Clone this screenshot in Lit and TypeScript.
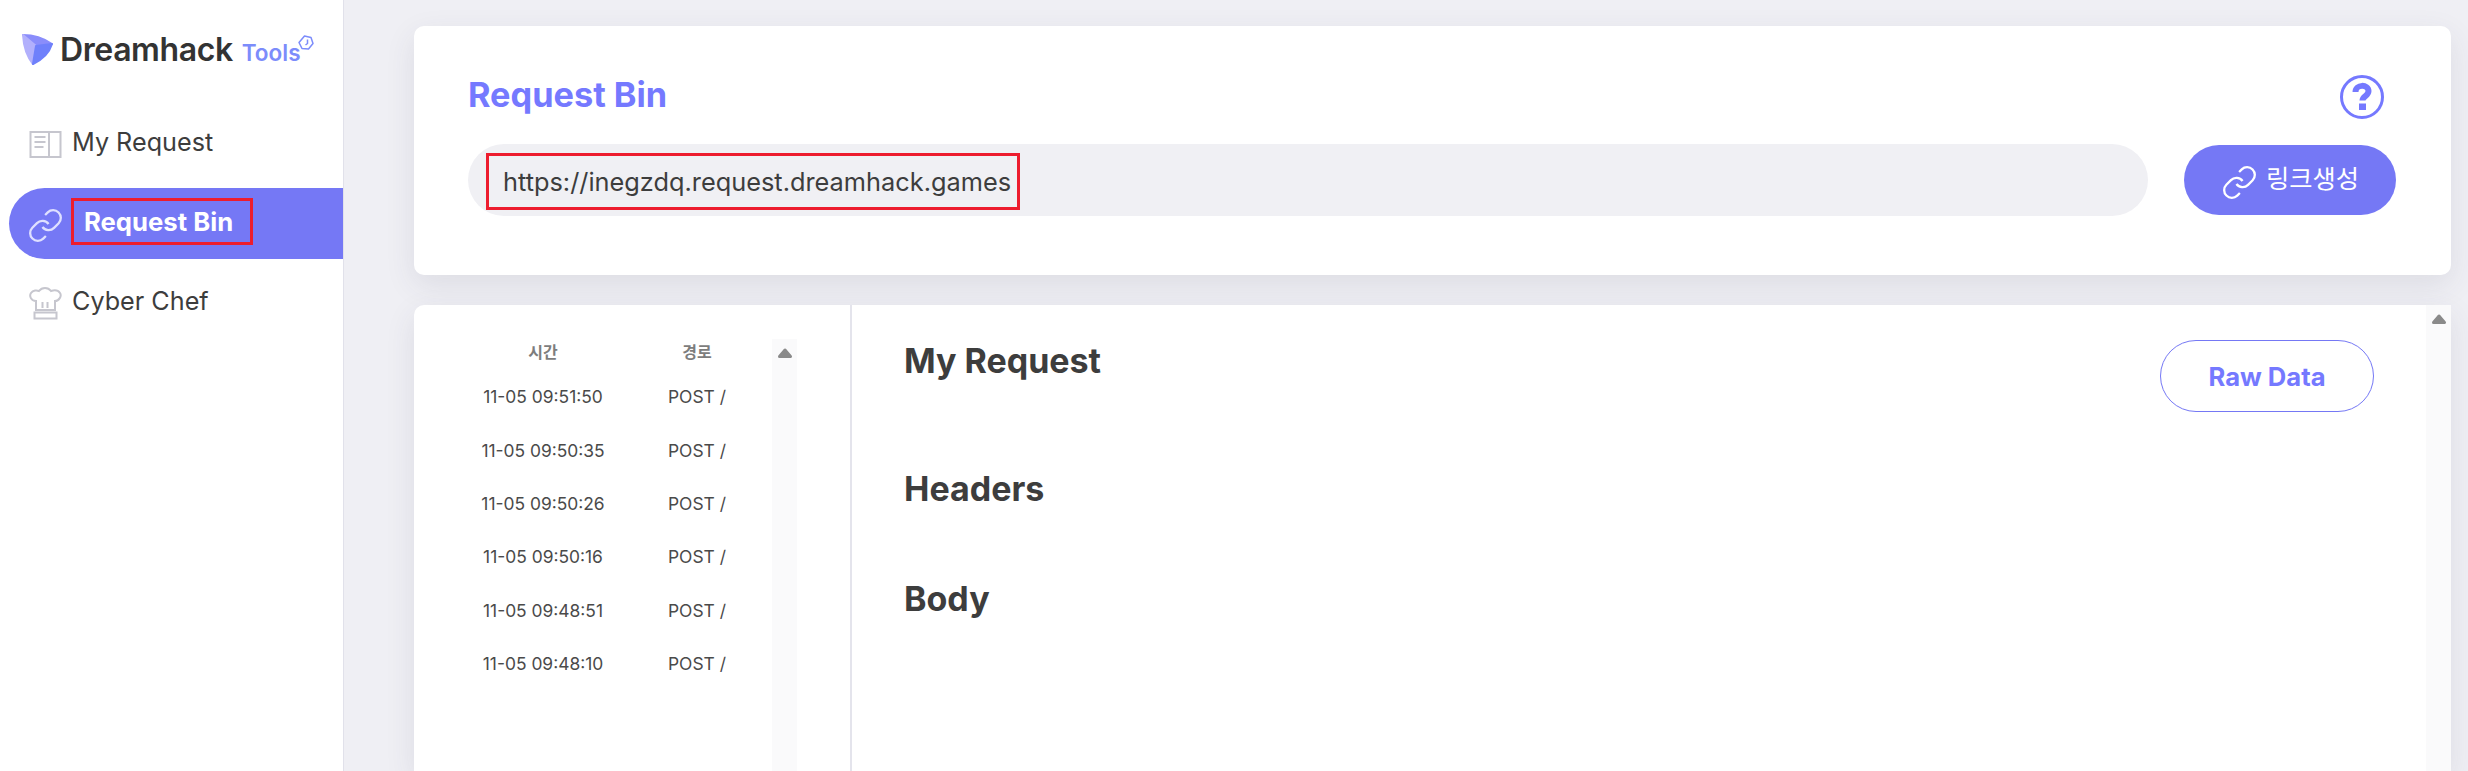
import { LitElement, html, css, svg } from 'lit';
import { customElement, state } from 'lit/decorators.js';

const linkIcon = svg`<path d="M10 13a5 5 0 0 0 7.54.54l3-3a5 5 0 0 0-7.07-7.07l-1.72 1.71"/><path d="M14 11a5 5 0 0 0-7.54-.54l-3 3a5 5 0 0 0 7.07 7.07l1.71-1.71"/>`;
const scrollArrow = svg`<path d="M8 3 13.500 9.500H2.500Z" fill="#8a8a8a" stroke="#8a8a8a" stroke-width="3" stroke-linejoin="round"/>`;

@customElement('app-root')
export class AppRoot extends LitElement {
  @state() requests = [
    '11-05 09:51:50',
    '11-05 09:50:35',
    '11-05 09:50:26',
    '11-05 09:50:16',
    '11-05 09:48:51',
    '11-05 09:48:10',
  ];

  static styles = css`
    :host {
      display: flex;
      width: 2468px;
      height: 771px;
      overflow: hidden;
      background: #efeff4;
      font-family: 'Inter', 'Noto Sans CJK KR', sans-serif;
      color: #3d3d3d;
    }

    .sidebar {
      box-sizing: border-box;
      width: 344px;
      flex: none;
      background: #fff;
      border-right: 1px solid #e1e1ea;
      padding-left: 9px;
    }

    .logo {
      display: flex;
      align-items: center;
      height: 34px;
      margin: 32px 0 0 12px;
    }

    .logo-mark {
      width: 33px;
      height: 33px;
      flex: none;
    }

    .logo-name {
      margin-left: 6px;
      font-size: 32px;
      font-weight: 600;
      letter-spacing: -0.4px;
      color: #333;
    }

    .logo-tools {
      margin: 6px 0 0 9px;
      font-size: 22.500px;
      font-weight: 600;
      color: #7c8cfb;
    }

    .logo-badge {
      width: 16px;
      height: 16px;
      margin: -12px 0 0 -3px;
      flex: none;
    }

    .nav {
      display: flex;
      flex-direction: column;
      margin-top: 40px;
    }

    .nav-item {
      display: flex;
      align-items: center;
      height: 71px;
      padding-left: 20px;
      font-size: 25.200px;
      color: #3d3d3d;
    }

    .nav-item.active {
      margin: 11px 0 6px;
      background: #7578f5;
      border-radius: 36px 0 0 36px;
      color: #fff;
      font-size: 25.700px;
      font-weight: 700;
    }

    .nav-icon {
      width: 33px;
      height: 33px;
      flex: none;
      margin: 5px 10px 0 0;
      fill: none;
      stroke: #c6c6ce;
      stroke-width: 2;
    }

    .active .nav-icon {
      width: 37px;
      height: 37px;
      margin: 3px 8px 0 -2px;
      stroke: #dfe0ff;
      stroke-width: 1.500;
    }

    .marked {
      box-sizing: border-box;
      border: 3px solid #ed1c2e;
    }

    .nav-label {
      display: flex;
      align-items: center;
      width: 182px;
      height: 47px;
      margin: -4px 0 0 -1px;
      padding-left: 10px;
    }

    .main {
      flex: 1;
      min-width: 0;
      padding: 26px 17px 0 70px;
      display: flex;
      flex-direction: column;
      gap: 30px;
    }

    .card {
      background: #fff;
      border-radius: 10px;
      box-shadow: 0 10px 30px rgba(60, 60, 90, 0.1);
    }

    .bin-card {
      box-sizing: border-box;
      height: 249px;
      flex: none;
      padding: 46px 55px 0 54px;
    }

    .bin-head {
      display: flex;
      justify-content: space-between;
      align-items: flex-start;
      height: 72px;
    }

    .bin-title {
      margin: 0;
      font-size: 34.300px;
      line-height: 46px;
      font-weight: 700;
      color: #7579ff;
    }

    .help {
      width: 46px;
      height: 46px;
      margin: 2px 11px 0 0;
    }

    .bin-row {
      display: flex;
      align-items: center;
      gap: 36px;
    }

    .url-field {
      box-sizing: border-box;
      flex: 1;
      height: 72px;
      padding: 3px 0 0 18px;
      border-radius: 36px;
      background: #f0f0f4;
      display: flex;
      align-items: center;
    }

    .url {
      width: 534px;
      height: 57px;
      padding-left: 14px;
      display: flex;
      align-items: center;
      font-size: 25.350px;
      color: #3d3d3d;
      white-space: nowrap;
    }

    .link-button {
      width: 212px;
      height: 70px;
      border: none;
      border-radius: 35px;
      background: #7578f5;
      color: #fff;
      font: inherit;
      font-size: 25.300px;
      display: flex;
      align-items: center;
      justify-content: center;
      gap: 8px;
    }

    .link-button svg {
      width: 37px;
      height: 37px;
      flex: none;
      fill: none;
      stroke: #fff;
      stroke-width: 1.500;
      margin-top: 4px;
    }

    .link-button span {
      margin-top: -6px;
    }

    .request-card {
      flex: 1;
      display: flex;
      min-height: 0;
      border-radius: 10px 0 0 0;
    }

    .list-pane {
      box-sizing: border-box;
      width: 438px;
      flex: none;
      border-right: 2px solid #e4e4ec;
      display: flex;
      padding: 34px 53px 0 0;
    }

    .list {
      flex: 1;
      min-width: 0;
    }

    .list-row {
      display: grid;
      grid-template-columns: 230px 78px;
      padding-left: 14px;
      text-align: center;
      font-size: 17.400px;
      height: 53.400px;
      align-items: center;
      color: #4a4a4a;
      white-space: nowrap;
    }

    .list-row.head {
      height: 24px;
      margin-bottom: 7px;
      font-size: 16px;
      font-weight: 600;
      color: #7d7d7d;
    }

    .scrollbar {
      width: 25px;
      flex: none;
      background: #fafafb;
      display: flex;
      justify-content: center;
      padding-top: 8px;
      box-sizing: border-box;
    }

    .scrollbar svg {
      width: 16px;
      height: 12px;
    }

    .detail {
      flex: 1;
      min-width: 0;
      display: flex;
    }

    .detail-body {
      flex: 1;
      min-width: 0;
      padding: 33px 52px 0 52px;
    }

    .detail-title {
      display: flex;
      justify-content: space-between;
      align-items: flex-start;
    }

    h2 {
      margin: 0;
      font-size: 34px;
      line-height: 46px;
      font-weight: 700;
      color: #3d3d3d;
    }

    .headers {
      margin-top: 54px;
    }

    .body {
      margin-top: 64px;
    }

    .raw-button {
      width: 214px;
      height: 72px;
      margin-top: 2px;
      border: 1px solid #7578f5;
      border-radius: 36px;
      background: #fff;
      color: #7579ff;
      font: inherit;
      font-size: 25.600px;
      font-weight: 700;
    }
  `;

  render() {
    return html`
      <aside class="sidebar">
        <div class="logo">
          <svg class="logo-mark" viewBox="0 0 33 33" stroke-linejoin="round">
            <path d="M2 2 Q18 2 31 11 L15 13 Z" fill="#8a8dfb" stroke="#8a8dfb" stroke-width="2" />
            <path d="M2 2 L15 13 L12 31 Q3 20 2 2 Z" fill="#b2b0fc" stroke="#b2b0fc" stroke-width="2" />
            <path d="M15 13 L31 11 Q27 24 12 31 Z" fill="#6f80fb" stroke="#6f80fb" stroke-width="2" />
          </svg>
          <span class="logo-name">Dreamhack</span>
          <span class="logo-tools">Tools</span>
          <svg class="logo-badge" viewBox="0 0 16 16" fill="none" stroke="#7c8cfb" stroke-width="1.500" stroke-linejoin="round">
            <path d="M6.500 1 13 2.500 15 8.500 10.500 14 4 13.500 1 7.500Z" />
            <path d="M9.500 4.500v4l-2 1.500" />
          </svg>
        </div>
        <nav class="nav">
          <div class="nav-item">
            <svg class="nav-icon" viewBox="0 0 33 33">
              <path d="M1.500 4h30v25h-30zM20 4v25M5.500 9h11M5.500 14h11M5.500 19h9" />
            </svg>
            <span>My Request</span>
          </div>
          <div class="nav-item active">
            <svg class="nav-icon" viewBox="0 0 24 24">${linkIcon}</svg>
            <span class="nav-label marked">Request Bin</span>
          </div>
          <div class="nav-item">
            <svg class="nav-icon" viewBox="0 0 33 33">
              <path d="M7 23V14C2 14 0 9 2 6 4 3 8 3 10 4 13 0 19 0 22 4 25 3 29 3 31 6 33 9 30 14 26 14V23Z" />
              <path d="M5.500 25.500h22v6h-22zM13.500 15v6M18.500 15v6" />
            </svg>
            <span>Cyber Chef</span>
          </div>
        </nav>
      </aside>
      <main class="main">
        <section class="card bin-card">
          <div class="bin-head">
            <h1 class="bin-title">Request Bin</h1>
            <svg class="help" viewBox="0 0 46 46" fill="none" stroke="#7579ff">
              <circle cx="23" cy="23" r="20.500" stroke-width="3" />
              <path d="M16.500 18c0-8 13-8 13-1 0 5-6 5-6 9.500" stroke-width="6" />
              <path d="M20 29.500h7v6.500h-7z" fill="#7579ff" stroke="none" />
            </svg>
          </div>
          <div class="bin-row">
            <div class="url-field">
              <span class="url marked">https://inegzdq.request.dreamhack.games</span>
            </div>
            <button class="link-button">
              <svg viewBox="0 0 24 24">${linkIcon}</svg>
              <span>링크생성</span>
            </button>
          </div>
        </section>
        <section class="card request-card">
          <div class="list-pane">
            <div class="list">
              <div class="list-row head"><span>시간</span><span>경로</span></div>
              ${this.requests.map(
                (time) => html`<div class="list-row"><span>${time}</span><span>POST /</span></div>`
              )}
            </div>
            <div class="scrollbar">
              <svg viewBox="0 0 16 12">${scrollArrow}</svg>
            </div>
          </div>
          <div class="detail">
            <div class="detail-body">
              <div class="detail-title">
                <h2>My Request</h2>
                <button class="raw-button">Raw Data</button>
              </div>
              <h2 class="headers">Headers</h2>
              <h2 class="body">Body</h2>
            </div>
            <div class="scrollbar">
              <svg viewBox="0 0 16 12">${scrollArrow}</svg>
            </div>
          </div>
        </section>
      </main>
    `;
  }
}

declare global {
  interface HTMLElementTagNameMap {
    'app-root': AppRoot;
  }
}
